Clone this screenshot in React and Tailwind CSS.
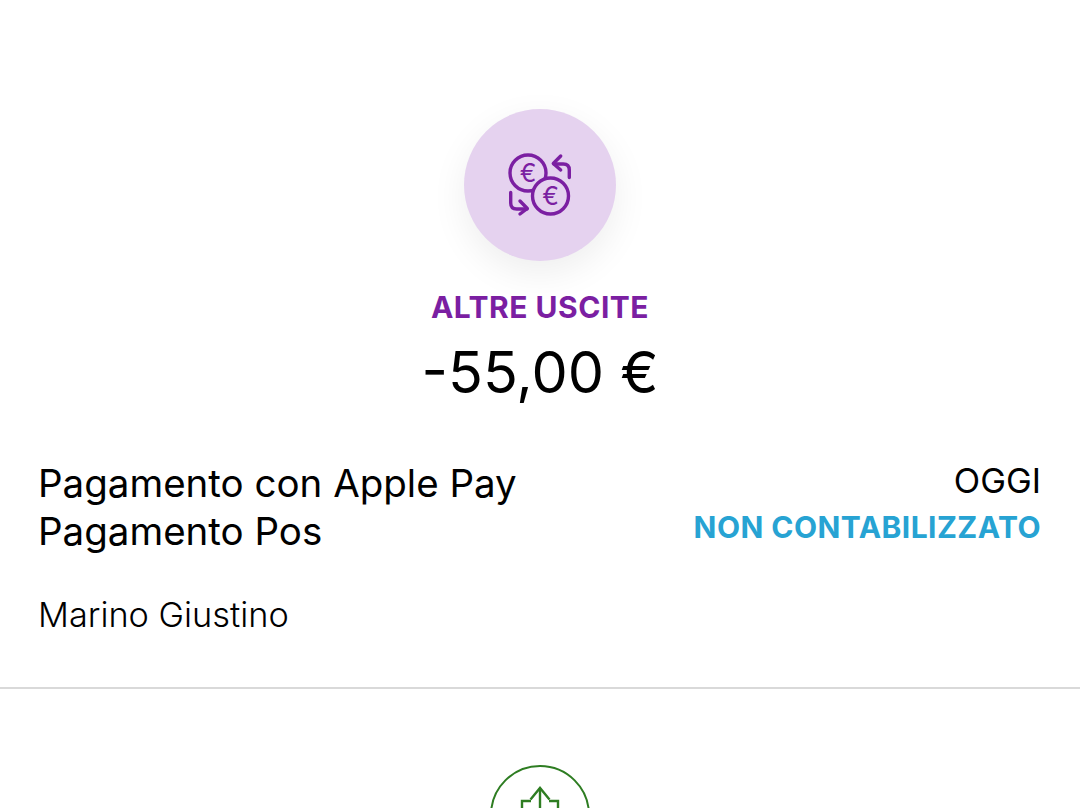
import React from 'react'

function ExchangeIcon() {
  return (
    <svg width="80" height="80" viewBox="0 0 80 80" fill="none" stroke="#7b1fa2" strokeWidth="3.4" strokeLinecap="round" strokeLinejoin="round">
      <circle cx="28" cy="28" r="18" />
      <circle cx="50.5" cy="51" r="18" fill="#e5d2ef" />
      <text x="28" y="37" textAnchor="middle" fontSize="25" fontFamily="Inter, sans-serif" fill="#7b1fa2" stroke="none">€</text>
      <text x="50.5" y="60" textAnchor="middle" fontSize="25" fontFamily="Inter, sans-serif" fill="#7b1fa2" stroke="none">€</text>
      <path d="M69.3 32.5V25q0-6-6-6H54" />
      <path d="M60.7 11 53.3 18.5 60.7 25" />
      <path d="M10.7 47.5V58q0 6 6 6H27" />
      <path d="M20 56 27.3 63.5 20 69" />
    </svg>
  )
}

function UploadIcon() {
  return (
    <svg width="40" height="30" viewBox="0 0 40 30" fill="none" stroke="#2e7d22" strokeWidth="2.4">
      <path d="M10.5 13.5 20 2 29.5 13.5" />
      <path d="M20 2V30" />
      <path d="M11 15H2V30" />
      <path d="M29 15H38V30" />
    </svg>
  )
}

export default function App() {
  return (
    <div className="h-[808px] w-[1080px] overflow-hidden bg-white text-black font-['Inter',sans-serif]">
      <div className="flex flex-col items-center pt-[109px]">
        <div className="flex h-[152px] w-[152px] items-center justify-center rounded-full bg-[#e5d2ef] shadow-[0_12px_36px_rgba(0,0,0,0.07)]">
          <ExchangeIcon />
        </div>
        <div className="mt-[28px] text-[30px] leading-[36px] font-bold tracking-[0.5px] text-[#7b1fa2]">ALTRE USCITE</div>
        <div className="mt-[12px] text-[57.5px] leading-[70px]">-55,00 €</div>
      </div>

      <div className="mt-[51px] flex justify-between pl-[38px] pr-[39px]">
        <div className="pt-[1px]">
          <div className="text-[38.5px] leading-[48px]">Pagamento con Apple Pay</div>
          <div className="text-[38.5px] leading-[48px]">Pagamento Pos</div>
          <div className="mt-[40px] text-[34.3px] leading-[40px] font-light">Marino Giustino</div>
        </div>
        <div className="flex flex-col items-end">
          <div className="text-[34.5px] leading-[46px]">OGGI</div>
          <div className="text-[30px] leading-[46px] font-bold tracking-[0.45px] text-[#27a3d3]">NON CONTABILIZZATO</div>
        </div>
      </div>

      <div className="mt-[52px] h-[2px] bg-[#d9d9d9]" />

      <div className="mt-[76px] flex justify-center">
        <div className="flex h-[100px] w-[100px] justify-center rounded-full border-[2.5px] border-[#2e7d22] pt-[19px]">
          <UploadIcon />
        </div>
      </div>
    </div>
  )
}
